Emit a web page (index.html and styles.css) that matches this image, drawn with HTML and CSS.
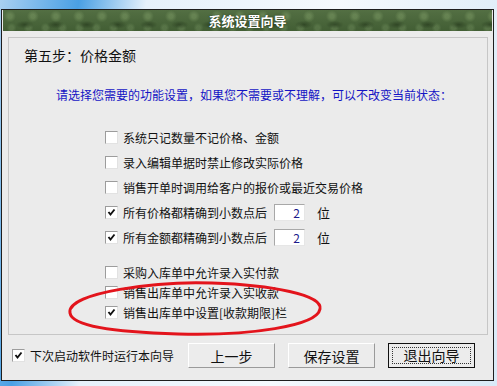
FILE: index.html
```html
<!DOCTYPE html>
<html lang="zh-CN">
<head>
  <meta charset="UTF-8" />
  <title>系统设置向导</title>
  <link rel="stylesheet" href="styles.css">
</head>
<body>
<div class="window">
  <div class="titlebar">系统设置向导</div>
  <div class="client">
    <!-- 设置面板 -->
    <div class="panel">
      <div class="step">第五步：价格金额</div>
      <div class="hint">请选择您需要的功能设置，如果您不需要或不理解，可以不改变当前状态：</div>
      <div class="options">
        <div class="opt"><span class="cb"></span>系统只记数量不记价格、金额</div>
        <div class="opt"><span class="cb"></span>录入编辑单据时禁止修改实际价格</div>
        <div class="opt"><span class="cb"></span>销售开单时调用给客户的报价或最近交易价格</div>
        <div class="opt"><span class="cb"><svg viewBox="0 0 11 11"><path d="M2.5 5 L4.5 7.5 L8.5 2.5"/></svg></span>所有价格都精确到小数点后<span class="num">2</span><span class="unit">位</span></div>
        <div class="opt"><span class="cb"><svg viewBox="0 0 11 11"><path d="M2.5 5 L4.5 7.5 L8.5 2.5"/></svg></span>所有金额都精确到小数点后<span class="num">2</span><span class="unit">位</span></div>
      </div>
      <div class="options tight">
        <div class="opt"><span class="cb"></span>采购入库单中允许录入实付款</div>
        <div class="opt"><span class="cb"></span>销售出库单中允许录入实收款</div>
        <div class="opt"><span class="cb"><svg viewBox="0 0 11 11"><path d="M2.5 5 L4.5 7.5 L8.5 2.5"/></svg></span>销售出库单中设置[收款期限]栏</div>
      </div>
    </div>
    <!-- 底部按钮 -->
    <div class="footer">
      <div class="opt small"><span class="cb"><svg viewBox="0 0 11 11"><path d="M2.5 5 L4.5 7.5 L8.5 2.5"/></svg></span>下次启动软件时运行本向导</div>
      <div class="buttons">
        <button class="btn">上一步</button>
        <button class="btn">保存设置</button>
        <button class="btn default"><span>退出向导</span></button>
      </div>
    </div>
  </div>
</div>
<!-- 红圈标记 -->
<svg class="mark" viewBox="0 0 497 386">
  <path d="M70 313 C66 292 160 281 212 283 C272 285 323 295 320 309 C317 326 250 336 178 334 C112 332 72 326 70 313"/>
</svg>
</body>
</html>
```
FILE: styles.css
```css
body {
  margin: 0;
  width: 497px;
  height: 386px;
  overflow: hidden;
  background: linear-gradient(100deg, #a9d0f1 0, #4aa0e4 14%, #e6f1fb 26%, #f5f9fd 60%, #d9eaf7 100%);
  font-family: "Noto Sans CJK SC", "Liberation Sans", sans-serif;
  color: #111;
}

.window {
  margin: 9px 0 0 1px;
  width: 493px;
  height: 372px;
  box-sizing: border-box;
  border: 1px solid #1e1e1e;
  background: #ebebeb;
}

.titlebar {
  height: 21px;
  margin: 0 1px;
  line-height: 21px;
  text-align: center;
  font-size: 13px;
  font-weight: bold;
  color: #fff;
  text-shadow: 0 0 2px #24341c;
  background-color: #4a663a;
  background-image:
    radial-gradient(circle at 30% 30%, rgba(130, 160, 105, 0.45) 0 2px, transparent 6px),
    radial-gradient(ellipse 9px 4px at 70% 70%, rgba(30, 48, 22, 0.55), transparent),
    radial-gradient(circle at 50% 85%, rgba(120, 150, 100, 0.35) 0 2px, transparent 5px),
    linear-gradient(#536f43, #425e34);
  background-size: 23px 21px, 31px 21px, 17px 21px, 100% 100%;
}

.client {
  padding: 6px 5px 0 6px;
}

.panel {
  height: 298px;
  box-sizing: border-box;
  border: 1px solid #c6c6c6;
  padding: 8px 0 0 15px;
}

.step {
  font-size: 14px;
  line-height: 18px;
}

.hint {
  margin: 23px 0 0 32px;
  font-size: 12px;
  line-height: 16px;
  color: #1414c4;
  white-space: nowrap;
}

.options {
  margin: 22px 0 0 81px;
}
.options.tight {
  margin-top: 12px;
}

.opt {
  display: flex;
  align-items: center;
  height: 25px;
  font-size: 12px;
  white-space: nowrap;
}
.tight .opt {
  height: 20px;
}

.cb {
  width: 11px;
  height: 11px;
  margin-right: 5px;
  border: 1px solid;
  border-color: #9c9c9c #e2e2e2 #e2e2e2 #9c9c9c;
  background: #fff;
  flex: none;
}
.cb svg {
  display: block;
  width: 11px;
  height: 11px;
}
.cb path {
  fill: none;
  stroke: #111;
  stroke-width: 1.9;
}

.num {
  width: 25px;
  height: 15px;
  margin-left: 7px;
  padding-right: 4px;
  border: 1px solid;
  border-color: #a8a8a8 #e6e6e6 #e6e6e6 #a8a8a8;
  background: #fff;
  color: #1c1c8c;
  text-align: right;
  line-height: 15px;
  font-size: 12px;
}

.unit {
  margin-left: 12px;
  font-size: 13px;
}

.footer {
  display: flex;
  align-items: center;
  height: 25px;
  margin-top: 8px;
  padding: 0 13px 0 4px;
}

.buttons {
  display: flex;
  gap: 13px;
  margin-left: auto;
}

.btn {
  width: 87px;
  height: 25px;
  padding: 0;
  border: 1px solid;
  border-color: #fff #9a9a9a #9a9a9a #fff;
  background: #ececec;
  font-family: inherit;
  font-size: 14px;
  color: #111;
}
.btn.default {
  border: 1px solid #111;
  padding: 3px;
}
.btn.default span {
  display: block;
  height: 100%;
  box-sizing: border-box;
  border: 1px dotted #333;
  line-height: 15px;
}

.mark {
  position: absolute;
  left: 0;
  top: 0;
  width: 497px;
  height: 386px;
  pointer-events: none;
}
.mark path {
  fill: none;
  stroke: #e3141c;
  stroke-width: 3;
}
```
